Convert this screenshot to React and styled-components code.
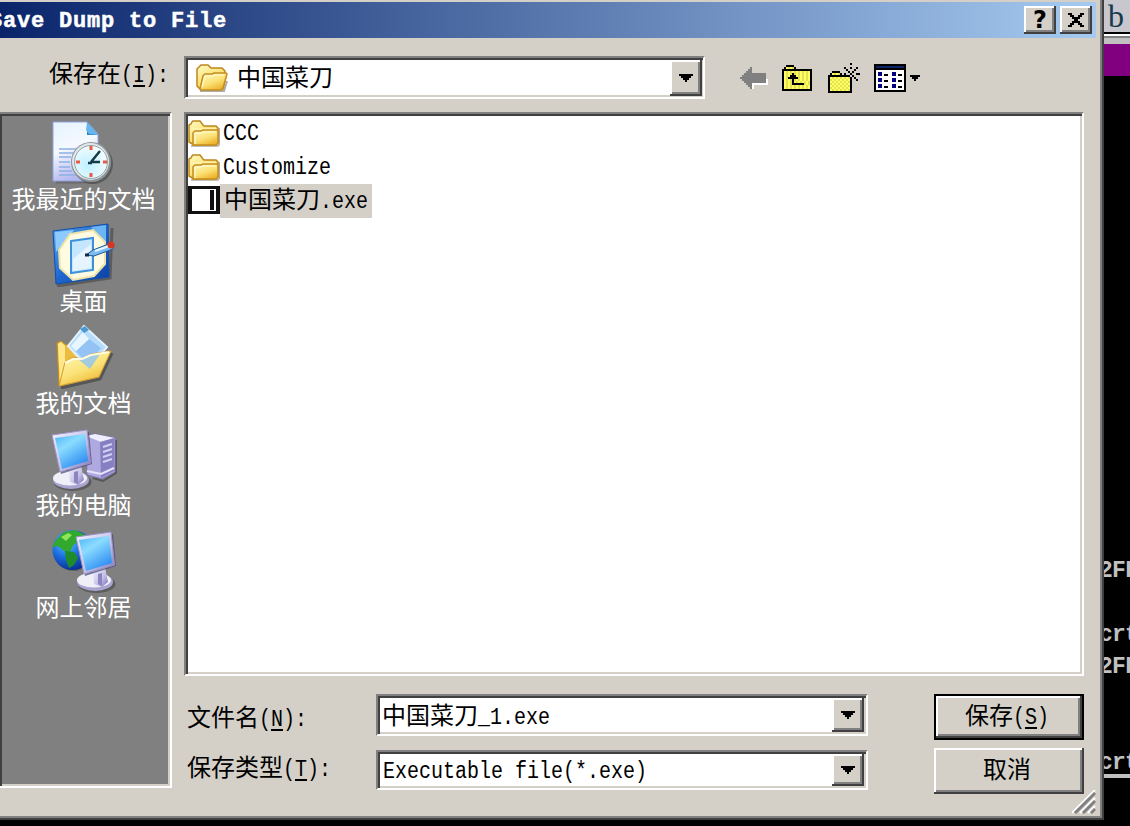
import React from "react";
import styled, { createGlobalStyle } from "styled-components";

const colors = {
  face: "#d4d0c8",
  shadow: "#808080",
  dark: "#404040",
  console: "#c0c0c0",
  purple: "#800080",
};

const cjk = `"Noto Sans CJK SC", sans-serif`;
const mono = `"Liberation Mono", monospace`;

const GlobalStyle = createGlobalStyle`
  * {
    box-sizing: border-box;
  }
  body {
    margin: 0;
    background: #000;
    overflow: hidden;
  }
  svg {
    display: block;
    flex: none;
  }
`;

const Screen = styled.div`
  display: flex;
  width: 1130px;
  height: 826px;
  overflow: hidden;
  background: #000;
`;

const Dialog = styled.div`
  position: relative;
  width: 1104px;
  height: 820px;
  padding-top: 2px;
  background: ${colors.face};
  border: solid ${colors.dark};
  border-width: 0 2px 2px 0;
  box-shadow: inset -2px -2px 0 ${colors.shadow};
  font-family: ${cjk};
  font-size: 24px;
  color: #000;
`;

const TitleBar = styled.div`
  display: flex;
  align-items: center;
  gap: 4px;
  width: 1096px;
  height: 36px;
  padding-right: 4px;
  background: linear-gradient(90deg, #0a246a, #a6caf0);
`;

const Title = styled.div`
  flex: 1;
  margin-left: -11px;
  padding-top: 3px;
  font-family: ${mono};
  font-size: 22px;
  font-weight: 700;
  letter-spacing: 0.8px;
  line-height: 33px;
  white-space: pre;
  color: #fff;
  -webkit-text-stroke: 0.5px #fff;
`;

const Raised = styled.div`
  display: flex;
  align-items: center;
  justify-content: center;
  flex: none;
  width: ${p => p.$w}px;
  height: ${p => p.$h}px;
  background: ${colors.face};
  box-shadow: inset -2px -2px 0 ${colors.dark}, inset 2px 2px 0 #fff,
    inset -4px -4px 0 ${colors.shadow};
  font-family: "DejaVu Sans", sans-serif;
  font-size: 24px;
  font-weight: 700;
  line-height: 26px;
`;

const Sunken = styled.div`
  border: 2px solid;
  border-color: ${colors.shadow} #fff #fff ${colors.shadow};
  box-shadow: inset 2px 2px 0 ${colors.dark}, inset -2px -2px 0 ${colors.face};
  background: #fff;
  padding: 2px;
`;

const LookRow = styled.div`
  display: flex;
  align-items: flex-start;
  height: 74px;
  padding-top: 18px;
`;

const LookLabel = styled.div`
  width: 135px;
  height: 36px;
  line-height: 32px;
  margin-left: 49px;
  white-space: nowrap;
`;

const Combo = styled(Sunken)`
  display: flex;
  align-items: center;
  width: ${p => p.$w}px;
  height: ${p => p.$h}px;
  padding-right: ${p => p.$right}px;
`;

const ComboText = styled.div`
  display: flex;
  align-items: center;
  flex: 1;
  height: 34px;
  gap: 9px;
  padding-left: ${p => p.$pad}px;
  line-height: 34px;
  white-space: nowrap;
`;

const ComboLabel = styled.span`
  margin-top: ${p => p.$top || 0}px;
`;

const Tools = styled.div`
  display: flex;
  align-items: center;
  height: 36px;
  margin: 4px 0 0 35px;
`;

const Tool = styled.div`
  width: ${p => p.$w}px;
`;

const Body = styled.div`
  display: flex;
  gap: 12px;
`;

const Places = styled(Sunken)`
  display: flex;
  flex-direction: column;
  align-items: center;
  gap: 8px;
  width: 172px;
  height: 676px;
  padding: 7px 3px 0 0;
  border-left: 0;
  background: ${colors.shadow};
`;

const Place = styled.div`
  display: flex;
  flex-direction: column;
  align-items: center;
  height: 94px;
  line-height: 26px;
  white-space: nowrap;
  color: #fff;
`;

const Main = styled.div`
  width: 900px;
`;

const Files = styled(Sunken)`
  height: 564px;
`;

const File = styled.div`
  display: flex;
  align-items: center;
  height: 34px;
`;

const FileName = styled.div`
  height: 34px;
  padding: ${p => (p.$selected ? "0 4px" : "0 3px")};
  line-height: 28px;
  white-space: nowrap;
  background: ${p => (p.$selected ? colors.face : "transparent")};
`;

const Form = styled.div`
  display: flex;
  justify-content: space-between;
  margin-top: 18px;
`;

const Fields = styled.div`
  display: flex;
  flex-direction: column;
  gap: 14px;
`;

const Field = styled.div`
  display: flex;
  height: 42px;
`;

const FieldLabel = styled.div`
  width: 192px;
  padding-left: 3px;
  line-height: ${p => p.$lh}px;
  white-space: nowrap;
`;

const Buttons = styled.div`
  display: flex;
  flex-direction: column;
  gap: 8px;
`;

const Button = styled.div`
  height: 46px;
  width: 150px;
  padding-right: 4px;
  text-align: center;
  white-space: nowrap;
  border: ${p => (p.$primary ? "2px solid #000" : "0")};
  line-height: ${p => (p.$primary ? 36 : 40)}px;
  box-shadow: inset -2px -2px 0 ${colors.dark}, inset 2px 2px 0 #fff,
    inset -4px -4px 0 ${colors.shadow};
`;

/* half-width latin cells, 12px per character */
const LatinBox = styled.span`
  display: inline-block;
  width: ${p => p.$n * 12}px;
  text-align: left;
  line-height: 24px;
  white-space: pre;
`;

const LatinText = styled.span`
  display: inline-block;
  font-family: ${mono};
  font-size: 23px;
  transform: scaleX(0.8696);
  transform-origin: 0 0;
  text-underline-offset: 3px;

  u {
    text-decoration-thickness: 2px;
  }
`;

const Grip = styled.div`
  position: absolute;
  right: 6px;
  bottom: 4px;
`;

const Side = styled.div`
  width: 26px;
  overflow: hidden;
`;

const SideTop = styled.div`
  height: 32px;
  padding-left: 4px;
  background: #c9c7ce;
  font-family: "Liberation Serif", serif;
  font-size: 32px;
  line-height: 32px;
  color: #17394d;
`;

const Stripe = styled.div`
  height: ${p => p.$h}px;
  background: ${p => p.$bg};
`;

const ConsoleLine = styled.div`
  height: ${p => (p.$ruled ? 30 : 32)}px;
  margin-left: -5px;
  font-family: ${mono};
  font-size: 23px;
  font-weight: 700;
  letter-spacing: -0.8px;
  line-height: 31px;
  white-space: pre;
  color: ${colors.console};
  border-bottom: ${p => (p.$ruled ? "4px solid #c0c0c0" : "0")};
`;

const Latin = ({ children, n }) => (
  <LatinBox $n={n || children.length}>
    <LatinText>{children}</LatinText>
  </LatinBox>
);

const Hotkey = ({ letter, colon }) => (
  <Latin n={colon ? 4 : 3}>
    (<u>{letter}</u>){colon ? ":" : ""}
  </Latin>
);

// draws a bitmap, every character is one 2x2 dot
const Pixels = ({ rows, palette }) => (
  <svg width={rows[0].length * 2} height={rows.length * 2} shapeRendering="crispEdges">
    {rows.map((row, y) =>
      row
        .split("")
        .map((c, x) =>
          palette[c] ? (
            <rect key={`${x}-${y}`} x={x * 2} y={y * 2} width="2" height="2" fill={palette[c]} />
          ) : null
        )
    )}
  </svg>
);

const palette = {
  k: "#000",
  y: "#ffff63",
  o: "#e3e052",
  g: "#808080",
  w: "#fff",
  n: "#0a246a",
  b: "#000080",
};

const closeRows = [
  "kk....kk",
  ".kk..kk.",
  "..kkkk..",
  "...kk...",
  "..kkkk..",
  ".kk..kk.",
  "kk....kk",
];

const arrowRows = ["kkkkkkk", ".kkkkk.", "..kkk..", "...k..."];

const smallArrowRows = ["kkkkk", ".kkk.", "..k.."];

const backRows = [
  ".....g.......",
  "....gg.......",
  "...ggg.......",
  "..ggggggggggg",
  ".gggggggggggg",
  "ggggggggggggg",
  ".ggggggggggggw",
  "..gggggggggggw",
  "...gggwwwwwwww",
  "....ggw.......",
  ".....gw.......",
].map(r => r.padEnd(14, "."));

const upRows = [
  "..kkkk.........",
  ".kyoyok........",
  "kkkkkkkkkkkkkkk",
  "kyoyoyoyoyoyoyk",
  "kyoyokoyoyoyoyk",
  "kyoykkkyoyoyoyk",
  "kyokkkkkoyoyoyk",
  "kyoyokoyoyoyoyk",
  "kyoyokyoyoyoyok",
  "kyoyokkkkkkoyok",
  "kyoyoyoyoyoyoyk",
  "kyoyoyoyoyoyoyk",
  "kkkkkkkkkkkkkkk",
];

const newRows = [
  "...........k....",
  "................",
  "........k..k..k.",
  ".........k...k..",
  "..kkkk....k.k...",
  ".kyoyok.k..k..kk",
  "kkkkkkkkkkk.k...",
  "kyoyoyoyoyok.k..",
  "koyoyoyoyoyk..k.",
  "kyoyoyoyoyok....",
  "koyoyoyoyoyk....",
  "kyoyoyoyoyok....",
  "koyoyoyoyoyk....",
  "kyoyoyoyoyok....",
  "kkkkkkkkkkkk....",
];

const viewRows = [
  "kkkkkkkkkkkkkkkk",
  "knnnnnnnnnnnnnnk",
  "kkkkkkkkkkkkkkkk",
  "kwwwwwwwwwwwwwwk",
  "kwbbwwwwwbbwwwwk",
  "kwbbwkkwwbbwkkwk",
  "kwwwwwwwwwwwwwwk",
  "kwbbwwwwwbbwwwwk",
  "kwbbwkkwwbbwkkwk",
  "kwwwwwwwwwwwwwwk",
  "kwbbwwwwwbbwwwwk",
  "kwbbwkkwwbbwkkwk",
  "kwwwwwwwwwwwwwwk",
  "kkkkkkkkkkkkkkkk",
];

const GradientStore = styled.svg`
  position: absolute;
`;

const Defs = () => (
  <GradientStore width="0" height="0">
    <defs>
      <linearGradient id="gold" x1="0" y1="0" x2="0.6" y2="1">
        <stop offset="0" stopColor="#fffbc4" />
        <stop offset="0.6" stopColor="#fbe277" />
        <stop offset="1" stopColor="#eeb62f" />
      </linearGradient>
      <linearGradient id="paper" x1="0" y1="0" x2="0.3" y2="1">
        <stop offset="0" stopColor="#e4f4ff" />
        <stop offset="0.5" stopColor="#f5f8ff" />
        <stop offset="1" stopColor="#b5b8f0" />
      </linearGradient>
      <linearGradient id="screen" x1="0" y1="0" x2="0.6" y2="1">
        <stop offset="0" stopColor="#4bb4f8" />
        <stop offset="0.4" stopColor="#8bdcff" />
        <stop offset="1" stopColor="#2f8ff2" />
      </linearGradient>
      <linearGradient id="case" x1="0" y1="0" x2="1" y2="1">
        <stop offset="0" stopColor="#f4f4ff" />
        <stop offset="0.6" stopColor="#c3bfe8" />
        <stop offset="1" stopColor="#7770b4" />
      </linearGradient>
      <linearGradient id="desk" x1="0" y1="0" x2="1" y2="1">
        <stop offset="0" stopColor="#5db1f5" />
        <stop offset="0.5" stopColor="#1e67d0" />
        <stop offset="1" stopColor="#0b3fa3" />
      </linearGradient>
      <radialGradient id="dial" cx="0.4" cy="0.6" r="0.6">
        <stop offset="0" stopColor="#bdf0ff" />
        <stop offset="1" stopColor="#f3fcff" />
      </radialGradient>
      <radialGradient id="sea" cx="0.35" cy="0.3" r="0.75">
        <stop offset="0" stopColor="#61c8ff" />
        <stop offset="0.5" stopColor="#1b6fe0" />
        <stop offset="1" stopColor="#08298f" />
      </radialGradient>
    </defs>
  </GradientStore>
);

const FolderIcon = () => (
  <svg width="32" height="32">
    <path d="M3 29h27l1.500-2V11" fill="none" stroke="#77756a" strokeWidth="1.500" opacity="0.6" />
    <path
      d="M1 25V8l2-1 1-2 1-1h7l3 4 1 1h12l2 2v15l-2 2H6z"
      fill="url(#gold)"
      stroke="#bd861c"
      strokeWidth="1.500"
    />
    <path d="M2 12h26" stroke="#fff6b0" strokeWidth="1.500" />
    <path
      d="M5 28V16l2-2h6l2-1h14l1 1v12l-2 2z"
      fill="url(#gold)"
      stroke="#c58d20"
      strokeWidth="1.500"
    />
    <path d="M7 27V16h6l2-1h13" fill="none" stroke="#fffbd0" strokeWidth="1.200" />
  </svg>
);

const OpenFolderIcon = () => (
  <svg width="32" height="30">
    <path d="M4 28h24l3-10" fill="none" stroke="#77756a" strokeWidth="2" opacity="0.6" />
    <path
      d="M1 23V6l2-2 2-2h7l3 3h11l3 3v4l1 1-3 13H4z"
      fill="url(#gold)"
      stroke="#bd861c"
      strokeWidth="1.500"
    />
    <path
      d="M4 26L7 13l2-2h7l2-1h12l1 1-4 14-2 2H5z"
      fill="url(#gold)"
      stroke="#c58d20"
      strokeWidth="1.500"
    />
    <path d="M6 24l3-11h8l2-1h9" fill="none" stroke="#fffbd0" strokeWidth="1.200" />
  </svg>
);

const ExeIcon = () => (
  <svg width="32" height="32" shapeRendering="crispEdges">
    <rect y="1" width="32" height="28" fill="#111" />
    <rect x="4" y="4" width="24" height="22" fill="#fff" />
    <rect x="22" y="5" width="4" height="20" fill="#111" />
  </svg>
);

const RecentIcon = () => (
  <svg width="64" height="64">
    <path d="M4 61h38V20" fill="none" stroke="#555" strokeWidth="3" opacity="0.5" />
    <path d="M1 1h34l11 12v47H1z" fill="url(#paper)" stroke="#8fa4df" />
    <path d="M35 1l11 13H35z" fill="#2f83c9" />
    <path d="M35 1l-1 8 3 4 9 1z" fill="#67b6ec" />
    <path
      d="M7 28h23M7 32h16M7 36h12M7 41h11M7 46h11M7 50h13M7 54h17"
      stroke="#8cb0e4"
      strokeWidth="1.500"
    />
    <circle cx="41" cy="43" r="20" fill="#444" opacity="0.6" />
    <circle cx="39" cy="41" r="20" fill="#8c9599" />
    <circle cx="38.500" cy="40.500" r="18.500" fill="#e2e6e6" />
    <circle cx="39" cy="41" r="16.500" fill="url(#dial)" stroke="#91a3aa" />
    <path d="M39 41l9-11M39 41h9M36 42h4" stroke="#163c48" strokeWidth="2.500" />
    <path d="M39 25v4M39 52v4M24 41h4M51 41h4" stroke="#ec5942" strokeWidth="3" />
  </svg>
);

const DesktopIcon = () => (
  <svg width="64" height="64">
    <path d="M5 63l53-8 2-50" fill="none" stroke="#444" strokeWidth="3" opacity="0.6" />
    <path d="M1 8l55-7 1 53-53 7z" fill="url(#desk)" stroke="#0f4fac" />
    <path d="M3 9l19-2L4 29z" fill="#8ccaff" />
    <path d="M39 4l15-2v20z" fill="#6bb5f2" />
    <path
      d="M18 11l23-4 12 12v22L42 53l-21 4L8 45 7 27z"
      fill="#fffbe0"
      stroke="#ebe3aa"
      strokeWidth="2"
    />
    <path d="M19 18l22-3v32l-22 3z" fill="#c4e7ff" stroke="#3c91dc" strokeWidth="2" />
    <path d="M21 36l18-15v24l-18 3z" fill="#e5f4ff" />
    <path d="M34 32l7-5 18-7 3 2-1 4-19 7z" fill="#7dbdf1" stroke="#205b9b" />
    <path d="M43 28l14-5" stroke="#e6f8ff" strokeWidth="2" />
    <circle cx="59" cy="22" r="3.500" fill="#d63622" />
    <path d="M33 32h4" stroke="#152a40" strokeWidth="3" />
  </svg>
);

const DocumentsIcon = () => (
  <svg width="64" height="64">
    <path d="M9 63l39-9 12-26" fill="none" stroke="#444" strokeWidth="3" opacity="0.7" />
    <path d="M5 18l4-2 5 4 4-1 7 8 30 1-8 23-40 10z" fill="#edbb3e" stroke="#c48c1d" />
    <path d="M6 19l3-2 4 4v35l-5 4z" fill="#ffe88c" />
    <path d="M32 1l23 21-18 22-21-23z" fill="#b5dcfa" stroke="#e3f2ff" strokeWidth="2" />
    <path d="M37 14l12 9-13 16-12-13z" fill="#94c2f4" />
    <path d="M19 21l12-14 6 7-13 12z" fill="#e8f6ff" />
    <path d="M28 4l5-3 4 4-5 3z" fill="#4d9ad2" />
    <path
      d="M7 61l6-24 8-5 9 2 9-5 20-3-12 26z"
      fill="url(#gold)"
      stroke="#d39d29"
    />
    <path d="M26 34l12-4 10-1-10 15z" fill="#8dc4f4" opacity="0.8" />
    <path d="M13 38l8-4h9l9-4 18-3" fill="none" stroke="#fffce0" strokeWidth="2" />
  </svg>
);

const Monitor = () => (
  <>
    <ellipse cx="21.500" cy="55" rx="19" ry="9" fill="#444" opacity="0.6" />
    <ellipse cx="20" cy="53" rx="18" ry="9" fill="#aaa4d0" />
    <ellipse cx="19" cy="51" rx="17" ry="7.500" fill="#efeff8" />
    <path d="M18 42l12-4 3 15-6 5-8-3z" fill="url(#case)" />
    <path d="M23 45v10l4 2V44z" fill="#8b84bd" />
    <path d="M3 10l35-5 3 32-31 10z" fill="#4a4878" opacity="0.7" />
    <path d="M1 8l35-5 3.500 33L9 45z" fill="url(#case)" stroke="#9a95c5" />
    <path d="M4 11l30-4 3 27-26 8z" fill="url(#screen)" />
  </>
);

const ComputerIcon = () => (
  <svg width="66" height="64" viewBox="0 0 66 64">
    <path d="M42 51l10 3 13-8V13" fill="none" stroke="#444" strokeWidth="2" opacity="0.7" />
    <path d="M35 9l9-2 20 4v34l-13 7-15-4z" fill="#b0a9e0" stroke="#7a73b1" />
    <path d="M35 9l9-2 20 4-14 4z" fill="#eeeeff" />
    <path d="M49 15l14-4v33l-13 7z" fill="#8680c3" />
    <path d="M52 20l9-3M52 25l9-3M52 30l9-3M52 35l9-3" stroke="#d4d0f4" strokeWidth="2" />
    <path d="M36 44l14 3 13-6" fill="none" stroke="#e6e3fa" strokeWidth="2" />
    <Monitor />
  </svg>
);

const NetworkIcon = () => (
  <svg width="66" height="64" viewBox="0 0 66 64">
    <circle cx="22.500" cy="22" r="20" fill="#444" opacity="0.5" />
    <circle cx="21.500" cy="21" r="20" fill="url(#sea)" />
    <path d="M5 11l8-8 11-2 10 5-5 7-6 2-4 8-6-1-6-5-6 1z" fill="#32a92e" />
    <path d="M14 22l9 1 4 6-4 7-5 3-3-8z" fill="#1f8c2b" />
    <path d="M10 8l7-4 4 2-6 6z" fill="#8ee45a" />
    <g transform="translate(24 0)">
      <Monitor />
    </g>
  </svg>
);

const places = [
  { name: "我最近的文档", icon: <RecentIcon /> },
  { name: "桌面", icon: <DesktopIcon /> },
  { name: "我的文档", icon: <DocumentsIcon /> },
  { name: "我的电脑", icon: <ComputerIcon /> },
  { name: "网上邻居", icon: <NetworkIcon /> },
];

const ComboArrow = ({ h }) => (
  <Raised $w={32} $h={h}>
    <Pixels rows={arrowRows} palette={palette} />
  </Raised>
);

const App = () => (
  <Screen>
    <GlobalStyle />
    <Defs />
    <Dialog>
      <TitleBar>
        <Title>Save Dump to File</Title>
        <Raised $w={32} $h={28}>?</Raised>
        <Raised $w={32} $h={28}>
          <Pixels rows={closeRows} palette={palette} />
        </Raised>
      </TitleBar>

      <LookRow>
        <LookLabel>
          保存在
          <Hotkey letter="I" colon />
        </LookLabel>
        <Combo $w={521} $h={43} $right={1}>
          <ComboText $pad={8}>
            <OpenFolderIcon />
            <ComboLabel $top={-4}>中国菜刀</ComboLabel>
          </ComboText>
          <ComboArrow h={36} />
        </Combo>
        <Tools>
          <Tool $w={42}>
            <Pixels rows={backRows} palette={palette} />
          </Tool>
          <Tool $w={46}>
            <Pixels rows={upRows} palette={palette} />
          </Tool>
          <Tool $w={46}>
            <Pixels rows={newRows} palette={palette} />
          </Tool>
          <Tool $w={36}>
            <Pixels rows={viewRows} palette={palette} />
          </Tool>
          <Pixels rows={smallArrowRows} palette={palette} />
        </Tools>
      </LookRow>

      <Body>
        <Places>
          {places.map(p => (
            <Place key={p.name}>
              {p.icon}
              {p.name}
            </Place>
          ))}
        </Places>

        <Main>
          <Files>
            <File>
              <FolderIcon />
              <FileName>
                <Latin>CCC</Latin>
              </FileName>
            </File>
            <File>
              <FolderIcon />
              <FileName>
                <Latin>Customize</Latin>
              </FileName>
            </File>
            <File>
              <ExeIcon />
              <FileName $selected>
                中国菜刀
                <Latin>.exe</Latin>
              </FileName>
            </File>
          </Files>

          <Form>
            <Fields>
              <Field>
                <FieldLabel $lh={44}>
                  文件名
                  <Hotkey letter="N" colon />
                </FieldLabel>
                <Combo $w={492} $h={42} $right={2}>
                  <ComboText $pad={2}>
                    <ComboLabel $top={-2}>
                      中国菜刀
                      <Latin>_1.exe</Latin>
                    </ComboLabel>
                  </ComboText>
                  <ComboArrow h={34} />
                </Combo>
              </Field>
              <Field>
                <FieldLabel $lh={32}>
                  保存类型
                  <Hotkey letter="T" colon />
                </FieldLabel>
                <Combo $w={492} $h={40} $right={2}>
                  <ComboText $pad={3}>
                    <Latin>Executable file(*.exe)</Latin>
                  </ComboText>
                  <ComboArrow h={32} />
                </Combo>
              </Field>
            </Fields>
            <Buttons>
              <Button $primary>
                保存
                <Hotkey letter="S" />
              </Button>
              <Button>取消</Button>
            </Buttons>
          </Form>
        </Main>
      </Body>

      <Grip>
        <svg width="24" height="24">
          <path d="M0 23L23 0M8 23L23 8M16 23l7-7" stroke="#fff" strokeWidth="2" />
          <path d="M3 23L23 3M11 23l12-12M19 23l4-4" stroke="#808080" strokeWidth="3" />
        </svg>
      </Grip>
    </Dialog>

    <Side>
      <SideTop>b</SideTop>
      <Stripe $h={2} $bg="#000" />
      <Stripe $h={2} $bg="#fff" />
      <Stripe $h={2} $bg="#808080" />
      <Stripe $h={6} $bg="#c0c0c0" />
      <Stripe $h={32} $bg={colors.purple} />
      <Stripe $h={480} $bg="#000" />
      <ConsoleLine>2FF</ConsoleLine>
      <ConsoleLine />
      <ConsoleLine>crt</ConsoleLine>
      <ConsoleLine>2FF</ConsoleLine>
      <ConsoleLine />
      <ConsoleLine />
      <ConsoleLine $ruled>crt</ConsoleLine>
    </Side>
  </Screen>
);

export default App;
